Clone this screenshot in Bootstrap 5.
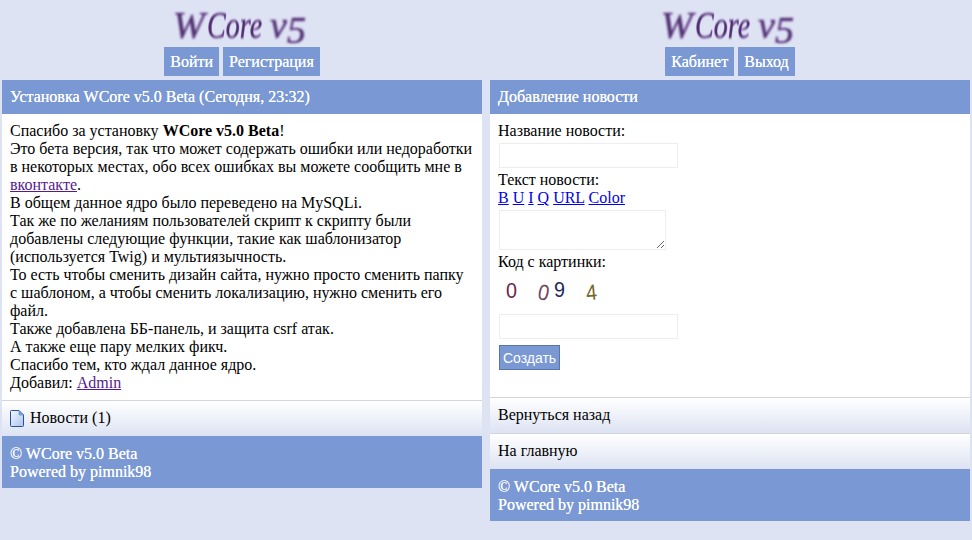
<!DOCTYPE html>
<html lang="ru">
<head>
    <meta charset="UTF-8">
    <meta name="viewport" content="width=device-width, initial-scale=1.0">
    <title>WCore v5</title>
    <link href="https://cdn.jsdelivr.net/npm/bootstrap@5.3.0/dist/css/bootstrap.min.css" rel="stylesheet">
    <style>
        body { background-color: #dde3f3; font-family: "Liberation Serif", serif; font-size: 16px; line-height: 18px; color: #000; }
        a { color: #0000ee; }
        a.seen { color: #551a8b; }
        .split-wrap { padding: 0 2px; }
        .pane { width: 480px; }
        .logo-box { height: 39px; margin-top: 8px; }
        .logo-svg { overflow: visible; }
        .logo-svg text { font-family: "Liberation Serif", serif; font-style: italic; font-size: 38px; fill: #4a3468; filter: blur(.8px); paint-order: stroke; stroke: #b884de; stroke-width: 1.1px; }
        .top-link { background: #7a98d4; color: #fff; text-decoration: none; padding: 6px 6px 5px; height: 29px; text-shadow: 0 0 .4px #fff; }
        .top-links { margin-bottom: 4px; }
        .head-bar { background: #7a98d4; color: #fff; height: 34px; padding: 8px; text-shadow: 0 0 .4px #fff; }
        .text-body-box { background: #fff; padding: 8px; }
        .left-box { height: 286px; }
        .right-box { height: 283px; }
        .grad-row { display: block; height: 36px; padding: 8px; color: #000; text-decoration: none; background: linear-gradient(#fff, #dde3f3); border-top: 1px solid #d3d6de; }
        .foot-bar { background: #7a98d4; color: #fff; padding: 9px 8px 7px; height: 52px; text-shadow: 0 0 .4px #fff; }
        .txt-field { display: block; width: 179px; height: 25px; margin: 3px 0 3px 1px; border: 1px solid #eee; background: #fff; padding: 0 4px; }
        .txt-area { display: block; width: 167px; height: 40px; margin: 3px 0 3px 1px; border: 1px solid #eee; background: #fff; }
        .captcha { display: block; margin: 2px 0 11px 1px; overflow: visible; }
        .captcha text { font-family: "Liberation Sans", sans-serif; font-size: 22px; font-weight: 400; }
        .send-btn { display: block; width: 61px; height: 25px; margin: 6px 0 0 1px; padding: 0; background: #7a98d4; color: #fff; border: 1px solid #5a75a8; font-family: "Liberation Sans", sans-serif; font-size: 14px; }
        .doc-ico { vertical-align: -4px; margin-right: 6px; }
    </style>
</head>
<body>
    <div class="split-wrap d-flex justify-content-between">
        <div class="pane">
            <div class="logo-box text-center">
                <svg class="logo-svg" width="150" height="39" viewBox="0 0 150 39"><text transform="translate(6 30)">W</text><text transform="translate(40 30) scale(.74 1)">Core</text><text transform="translate(103 30)">v</text><text transform="translate(120 35)">5</text></svg>
            </div>
            <div class="top-links d-flex justify-content-center gap-1">
                <a class="top-link" href="#">Войти</a>
                <a class="top-link" href="#">Регистрация</a>
            </div>
            <div class="head-bar">Установка WCore v5.0 Beta (Сегодня, 23:32)</div>
            <div class="text-body-box left-box">
                Спасибо за установку <b>WCore v5.0 Beta</b>!<br>
                Это бета версия, так что может содержать ошибки или недоработки в некоторых местах, обо всех ошибках вы можете сообщить мне в <a class="seen" href="#">вконтакте</a>.<br>
                В общем данное ядро было переведено на MySQLi.<br>
                Так же по желаниям пользователей скрипт к скрипту были добавлены следующие функции, такие как шаблонизатор (используется Twig) и мультиязычность.<br>
                То есть чтобы сменить дизайн сайта, нужно просто сменить папку с шаблоном, а чтобы сменить локализацию, нужно сменить его файл.<br>
                Также добавлена ББ-панель, и защита csrf атак.<br>
                А также еще пару мелких фикч.<br>
                Спасибо тем, кто ждал данное ядро.<br>
                Добавил: <a class="seen" href="#">Admin</a>
            </div>
            <a class="grad-row" href="#">
                <svg class="doc-ico" width="14" height="17" viewBox="0 0 14 17"><defs><linearGradient id="docfill" x1="0" y1="0" x2="1" y2="1"><stop offset="0" stop-color="#f4f8ff"/><stop offset="1" stop-color="#a9c4ec"/></linearGradient></defs><path d="M.5 1.5a1 1 0 0 1 1-1H9L13.500 5v10.500a1 1 0 0 1-1 1h-11a1 1 0 0 1-1-1z" fill="url(#docfill)" stroke="#2b4f9e"/><path d="M9 .5V5h4.500z" fill="#7fa2dc" stroke="#5f86c8" stroke-width=".6"/></svg>Новости (1)
            </a>
            <div class="foot-bar">© WCore v5.0 Beta<br>Powered by pimnik98</div>
        </div>
        <div class="pane">
            <div class="logo-box text-center">
                <svg class="logo-svg" width="150" height="39" viewBox="0 0 150 39"><text transform="translate(6 30)">W</text><text transform="translate(40 30) scale(.74 1)">Core</text><text transform="translate(103 30)">v</text><text transform="translate(120 35)">5</text></svg>
            </div>
            <div class="top-links d-flex justify-content-center gap-1">
                <a class="top-link" href="#">Кабинет</a>
                <a class="top-link" href="#">Выход</a>
            </div>
            <div class="head-bar">Добавление новости</div>
            <form class="text-body-box right-box" onsubmit="return false">
                Название новости:<br>
                <input class="txt-field" type="text">
                Текст новости:<br>
                <a href="#">B</a> <a href="#">U</a> <a href="#">I</a> <a href="#">Q</a> <a href="#">URL</a> <a href="#">Color</a>
                <textarea class="txt-area"></textarea>
                Код с картинки:<br>
                <svg class="captcha" width="120" height="30" viewBox="0 0 120 30">
                    <text x="7" y="25" fill="#6b2450" textLength="11" lengthAdjust="spacingAndGlyphs">0</text>
                    <text x="39" y="27" fill="#6f4560" textLength="11" lengthAdjust="spacingAndGlyphs" transform="rotate(12 44 20)">0</text>
                    <text x="55" y="24" fill="#232a5e" textLength="11" lengthAdjust="spacingAndGlyphs">9</text>
                    <text x="87" y="27" fill="#75682a" textLength="11" lengthAdjust="spacingAndGlyphs" transform="rotate(-6 92 20)">4</text>
                </svg>
                <input class="txt-field" type="text">
                <button class="send-btn" type="submit">Создать</button>
            </form>
            <a class="grad-row" href="#">Вернуться назад</a>
            <a class="grad-row" href="#">На главную</a>
            <div class="foot-bar">© WCore v5.0 Beta<br>Powered by pimnik98</div>
        </div>
    </div>
    <script src="https://cdn.jsdelivr.net/npm/bootstrap@5.3.0/dist/js/bootstrap.bundle.min.js"></script>
</body>
</html>
